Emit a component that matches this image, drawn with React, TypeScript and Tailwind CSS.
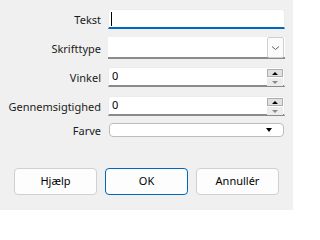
import React from 'react';

const font = { fontFamily: '"Noto Sans", "Open Sans", sans-serif' };

const Label = ({ children }: { children: React.ReactNode }) => (
  <div className="w-[93px] shrink-0 text-right text-[11px] leading-none text-[#1b1b1b]">{children}</div>
);

const Spinner = () => (
  <div className="absolute right-[1px] top-[1px] flex flex-col">
    <div className="flex h-[8px] w-[16px] items-center justify-center border border-[#adadad] bg-[#e1e1e1]">
      <div className="h-0 w-0 border-x-[3px] border-b-[3px] border-x-transparent border-b-black" />
    </div>
    <div className="mt-[1px] flex h-[8px] w-[16px] items-center justify-center bg-[#ececec]">
      <div className="h-0 w-0 border-x-[3px] border-t-[3px] border-x-transparent border-t-[#8a8a8a]" />
    </div>
  </div>
);

const NumberField = ({ value }: { value: string }) => (
  <div className="relative flex h-[20px] w-[177px] items-center rounded-t-[3px] border border-b-2 border-[#ececec] border-b-[#8a8a8a] bg-white pl-[3px] text-[11px] text-black">
    {value}
    <Spinner />
  </div>
);

export default function App() {
  return (
    <div className="h-[210px] w-[293px] bg-[#f0f0f0]" style={font}>
      <div className="flex flex-col pl-[8px] pt-[9px]">
        <div className="flex h-[20px] items-center gap-[7px]">
          <Label>Tekst</Label>
          <div className="flex h-[20px] w-[177px] items-center rounded-t-[3px] border border-b-2 border-[#ececec] border-b-[#0067c0] bg-white pl-[2px]">
            <div className="h-[14px] w-[1px] bg-black" />
          </div>
        </div>
        <div className="mt-[8px] flex h-[22px] items-center gap-[7px]">
          <Label>Skrifttype</Label>
          <div className="relative h-[22px] w-[177px] border-b-2 border-[#8a8a8a] bg-white">
            <div className="absolute right-[1px] top-0 flex h-[21px] w-[17px] items-center justify-center rounded-[2px] border border-[#cfcfcf] bg-[#fbfbfb]">
              <svg width="9" height="6" viewBox="0 0 9 6">
                <path d="M1 1.5 L4.5 4.5 L8 1.5" fill="none" stroke="#606060" strokeWidth="1" />
              </svg>
            </div>
          </div>
        </div>
        <div className="mt-[8px] flex h-[20px] items-center gap-[7px]">
          <Label>Vinkel</Label>
          <NumberField value="0" />
        </div>
        <div className="mt-[9px] flex h-[20px] items-center gap-[7px]">
          <Label>Gennemsigtighed</Label>
          <NumberField value="0" />
        </div>
        <div className="mt-[7px] flex h-[14px] items-center gap-[7px]">
          <Label>Farve</Label>
          <div className="relative ml-[1px] h-[14px] w-[175px] rounded-[4px] border border-[#bcbcbc] bg-white">
            <div className="absolute right-[11px] top-[4px] h-0 w-0 border-x-[3px] border-t-[4px] border-x-transparent border-t-black" />
          </div>
        </div>
      </div>
      <div className="mt-[31px] flex gap-[8px] pl-[14px]">
        <button className="h-[27px] w-[83px] rounded-[4px] border border-[#d0d0d0] bg-[#fdfdfd] text-[11px] text-black">Hjælp</button>
        <button className="h-[27px] w-[83px] rounded-[4px] border border-[#0067c0] bg-[#fdfdfd] text-[11px] text-black">OK</button>
        <button className="h-[27px] w-[83px] rounded-[4px] border border-[#d0d0d0] bg-[#fdfdfd] text-[11px] text-black">Annullér</button>
      </div>
    </div>
  );
}
